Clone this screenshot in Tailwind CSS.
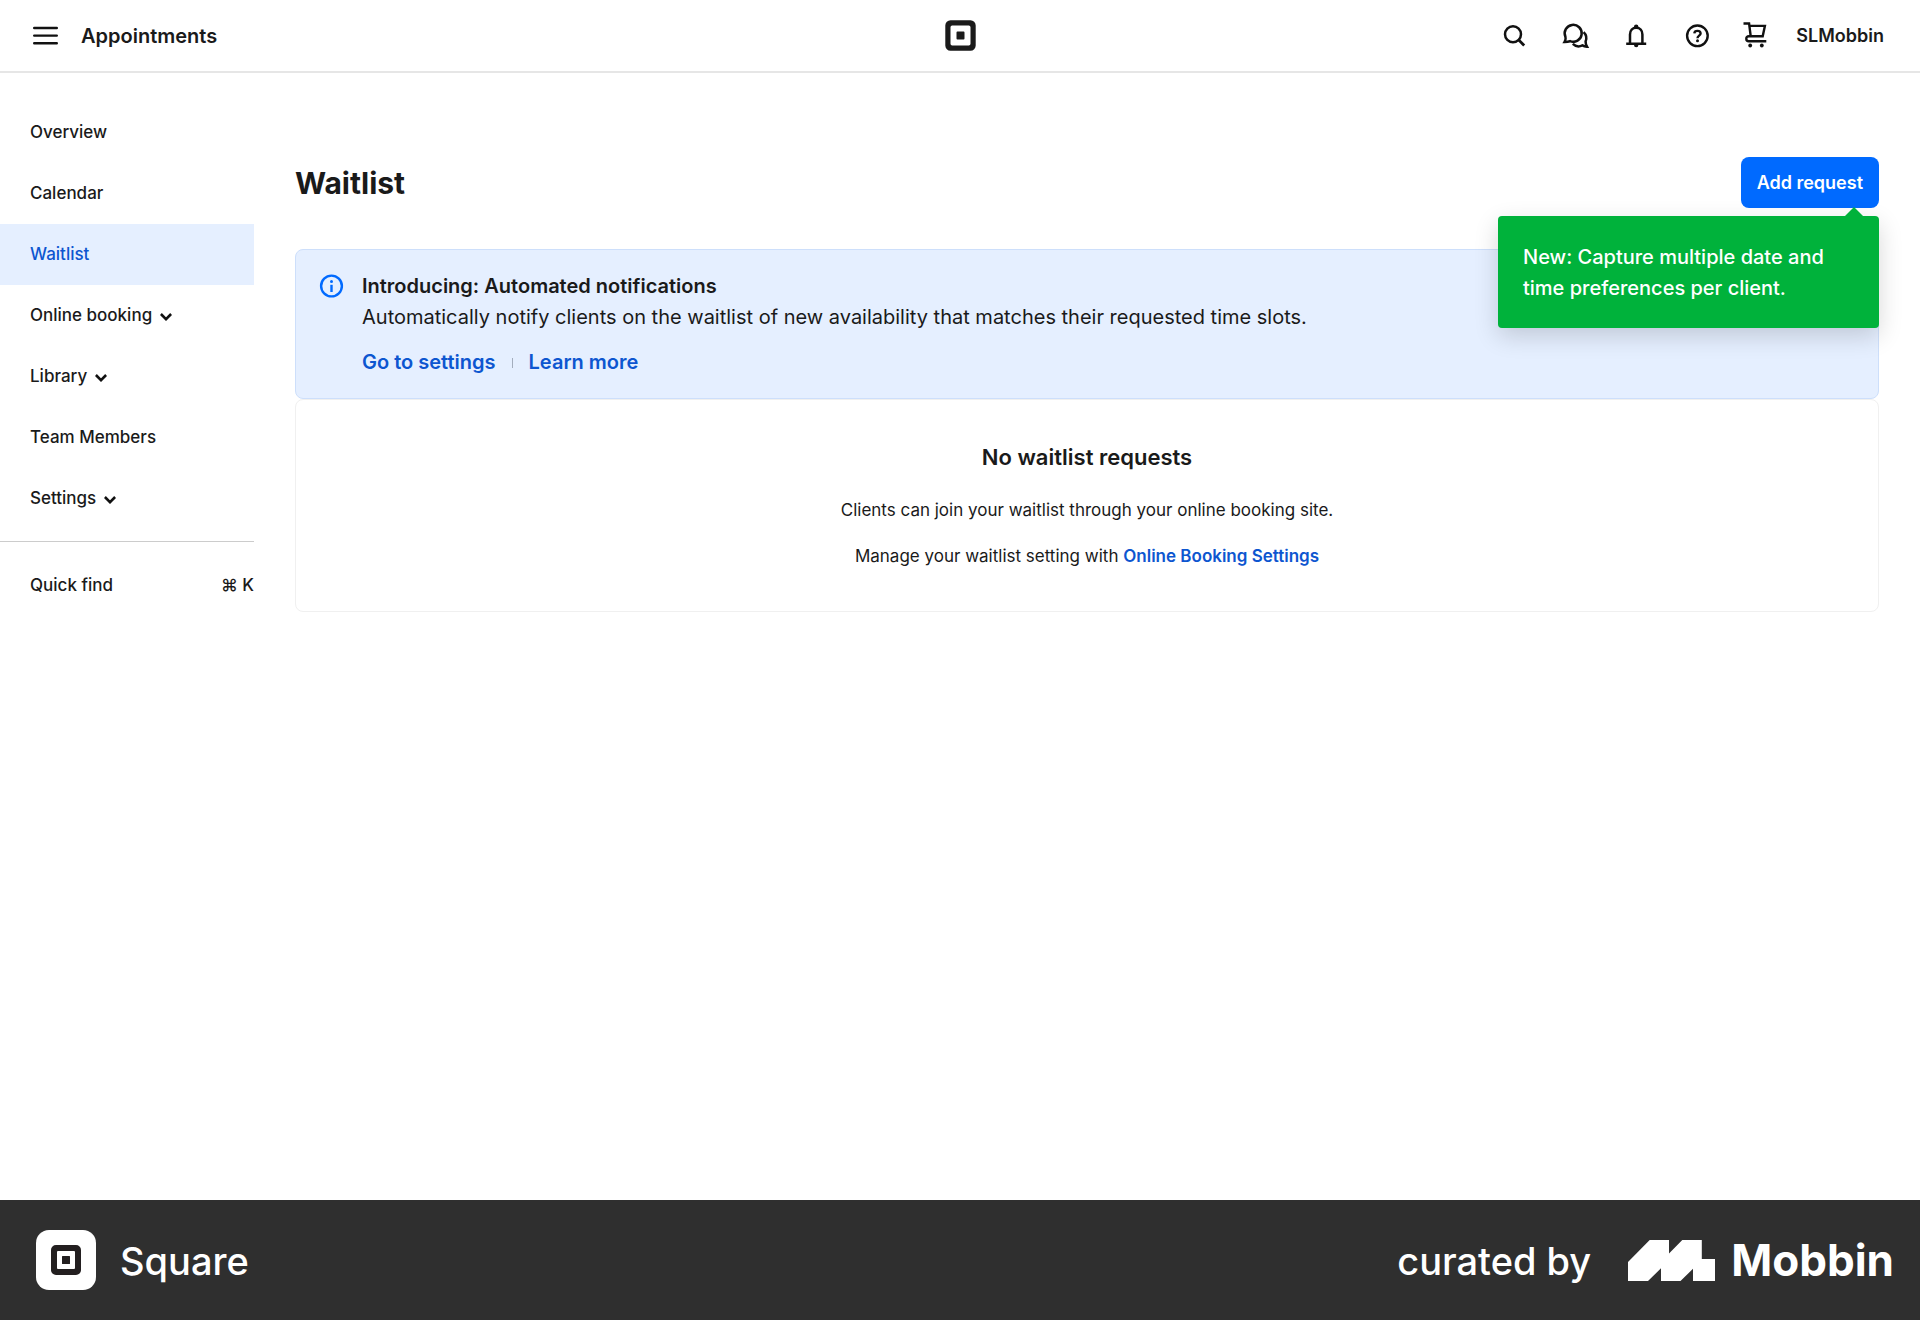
<!DOCTYPE html>
<html lang="en">

<head>
    <meta charset="UTF-8" />
    <meta name="viewport" content="width=device-width, initial-scale=1.0" />
    <title>Waitlist - Appointments</title>
    <script src="https://cdn.jsdelivr.net/npm/@tailwindcss/browser@4"></script>
</head>

<body class="bg-white min-h-screen flex flex-col font-['Inter',sans-serif] text-[#1a1a1a]">
    <header class="grid grid-cols-[1fr_auto_1fr] items-center border-b-2 border-[#e6e6e6]">
        <div class="flex items-center gap-5 pl-[30px]">
            <button type="button" aria-label="Menu">
                <svg class="size-[31px]" viewBox="0 0 31 31" fill="none" stroke="#111" stroke-width="2.4" stroke-linecap="round">
                    <path d="M4.2 8h22.6M4.2 15.6h22.6M4.2 23.3h22.6" />
                </svg>
            </button>
            <span class="text-xl leading-[31px] font-semibold pt-0.5">Appointments</span>
        </div>
        <a href="#" aria-label="Home">
            <svg class="size-[31px]" viewBox="0 0 31 31">
                <path fill="#1a1a1a" fill-rule="evenodd" d="M5.5.3h20a5.2 5.2 0 0 1 5.2 5.2v20a5.2 5.2 0 0 1-5.2 5.2h-20a5.2 5.2 0 0 1-5.2-5.2v-20A5.2 5.2 0 0 1 5.5.3zM7.2 5.5a1.7 1.7 0 0 0-1.7 1.7v16.6a1.7 1.7 0 0 0 1.7 1.7h16.6a1.7 1.7 0 0 0 1.7-1.7V7.2a1.7 1.7 0 0 0-1.7-1.7zM12.4 11.5h6.2a.9.9 0 0 1 .9.9v6.2a.9.9 0 0 1-.9.9h-6.2a.9.9 0 0 1-.9-.9v-6.2a.9.9 0 0 1 .9-.9z" />
            </svg>
        </a>
        <div class="flex items-center justify-end pr-9">
            <button type="button" aria-label="Search" class="w-[61px] h-[71px] flex items-center justify-center">
                <svg class="size-[30px]" viewBox="0 0 30 30" fill="none" stroke="#111" stroke-width="2.5">
                    <circle cx="14" cy="13.3" r="8" />
                    <path d="M19.5 18.8l5.7 5.7" stroke-width="2.8" />
                </svg>
            </button>
            <button type="button" aria-label="Messages" class="w-[61px] h-[71px] flex items-center justify-center">
                <svg class="size-[30px]" viewBox="0 0 30 30" fill="none" stroke="#111" stroke-width="2.5">
                    <path d="M4.6 20.9C5.8 19 6 17.6 5.4 15.7A8.5 8.5 0 1 1 10 20.2Q7.8 20.9 4.6 20.9z" />
                    <path d="M23.6 11.2A8.5 8.5 0 0 1 25.6 20.5Q25.5 23 27 25.7Q24.2 25.5 22.4 24.4A8.5 8.5 0 0 1 12.8 22.9" />
                </svg>
            </button>
            <button type="button" aria-label="Notifications" class="w-[61px] h-[71px] flex items-center justify-center">
                <svg class="size-[30px]" viewBox="0 0 30 30" fill="none" stroke="#111" stroke-width="2.5">
                    <path d="M9 22.5V13.5C9 9.5 11.5 6.7 15.2 6.7S21.4 9.5 21.4 13.5V22.5M5.2 22.8h20" />
                    <path d="M13 6.5V5.6a2.2 2.2 0 0 1 4.4 0v.9zM13 23.5h4.4v.6a2.2 2.2 0 0 1-4.4 0z" fill="#111" stroke="none" />
                </svg>
            </button>
            <button type="button" aria-label="Help" class="w-[61px] h-[71px] flex items-center justify-center">
                <svg class="size-[30px]" viewBox="0 0 30 30" fill="none" stroke="#111" stroke-width="2.4">
                    <circle cx="15.4" cy="14.8" r="10.3" />
                    <path d="M12.3 12.3C12.5 10.6 13.7 9.9 15.4 9.9c1.8 0 3.2 1 3.2 2.6 0 2.1-3.1 2.3-3.1 4.7" />
                    <circle cx="15.5" cy="19.7" r="1.5" fill="#111" stroke="none" />
                </svg>
            </button>
            <button type="button" aria-label="Cart" class="w-[61px] h-[71px] flex items-center justify-center">
                <svg class="size-[30px]" viewBox="0 0 30 30" fill="none" stroke="#111" stroke-width="2.4">
                    <path d="M.5 2.5H6.1L7.7 15.1M6.5 4.9H21.9L19.7 15.2H6C3.9 15.2 3.3 16.5 3.3 17.7S4.2 20.3 5.8 20.3H23.3" />
                    <circle cx="7.2" cy="24.5" r="1.9" fill="#111" stroke="none" />
                    <circle cx="18.8" cy="24.5" r="1.9" fill="#111" stroke="none" />
                </svg>
            </button>
            <button type="button" class="pl-2 text-lg leading-[31px] font-semibold">SLMobbin</button>
        </div>
    </header>

    <div class="flex-1 flex items-start">
        <aside class="w-[254px] shrink-0 pt-[29px] text-[17px] font-medium">
            <nav class="flex flex-col">
                <a href="#" class="h-[61px] pl-[30px] flex items-center">Overview</a>
                <a href="#" class="h-[61px] pl-[30px] flex items-center">Calendar</a>
                <a href="#" class="h-[61px] pl-[30px] flex items-center bg-[#e5efff] text-[#0d56d0]">Waitlist</a>
                <button type="button" class="h-[61px] pl-[30px] flex items-center gap-2">
                    Online booking
                    <svg class="w-3 h-2 mt-0.5" viewBox="0 0 12 8" fill="none" stroke="#111" stroke-width="2.6"><path d="M.9 1l5.1 5.1L11.1 1" /></svg>
                </button>
                <button type="button" class="h-[61px] pl-[30px] flex items-center gap-2">
                    Library
                    <svg class="w-3 h-2 mt-0.5" viewBox="0 0 12 8" fill="none" stroke="#111" stroke-width="2.6"><path d="M.9 1l5.1 5.1L11.1 1" /></svg>
                </button>
                <a href="#" class="h-[61px] pl-[30px] flex items-center">Team Members</a>
                <button type="button" class="h-[61px] pl-[30px] flex items-center gap-2">
                    Settings
                    <svg class="w-3 h-2 mt-0.5" viewBox="0 0 12 8" fill="none" stroke="#111" stroke-width="2.6"><path d="M.9 1l5.1 5.1L11.1 1" /></svg>
                </button>
            </nav>
            <button type="button" class="w-full mt-3 border-t border-[#cccccc] pt-7 pl-[30px] flex items-center justify-between leading-[31px]">
                <span>Quick find</span>
                <span>⌘ K</span>
            </button>
        </aside>

        <main class="flex-1 pt-[84px] pl-[41px] pr-[41px]">
            <div class="flex items-center justify-between">
                <h1 class="text-[30px] font-bold pt-0.5">Waitlist</h1>
                <div class="relative">
                    <button type="button" class="h-[51px] px-4 rounded-lg bg-[#006aff] text-white text-lg font-semibold">Add request</button>
                    <!-- tooltip -->
                    <div class="absolute top-full right-0 mt-2 w-[381px] px-[25px] pt-[26px] pb-6 rounded bg-[#00b23b] text-white text-xl leading-[31px] font-medium shadow-[0_8px_24px_rgba(0,0,0,0.16)]">
                        <svg class="absolute bottom-full right-4 w-[18px] h-[9px]" viewBox="0 0 18 9" fill="#00b23b"><path d="M0 9l9-9 9 9z" /></svg>
                        New: Capture multiple date and time preferences per client.
                    </div>
                </div>
            </div>

            <section class="mt-[41px] flex gap-[17px] rounded-lg border border-[#cddffb] bg-[#e5efff] pt-[21px] pb-5 pl-[22px] pr-6 text-xl leading-[31px]">
                <svg class="size-[27px] mt-0.5 shrink-0" viewBox="0 0 27 27" fill="none" stroke="#006aff" stroke-width="2.4">
                    <circle cx="13.5" cy="13" r="10.4" />
                    <path d="M13.5 11.8v7.2" />
                    <circle cx="13.5" cy="8.5" r="1.5" fill="#006aff" stroke="none" />
                </svg>
                <div>
                    <h2 class="font-semibold">Introducing: Automated notifications</h2>
                    <p>Automatically notify clients on the waitlist of new availability that matches their requested time slots.</p>
                    <div class="mt-3.5 flex items-center gap-4 font-semibold text-[#0d56d0]">
                        <a href="#">Go to settings</a>
                        <span class="w-px h-2.5 bg-[#a3adbd]"></span>
                        <a href="#">Learn more</a>
                    </div>
                </div>
            </section>

            <section class="rounded-lg border border-[#f0f0f0] pt-[42px] pb-[39px] text-center text-[17px] leading-[31px]">
                <h2 class="text-[22px] leading-[31px] font-semibold">No waitlist requests</h2>
                <p class="mt-[22px]">Clients can join your waitlist through your online booking site.</p>
                <p class="mt-[15px]">Manage your waitlist setting with <a href="#" class="font-semibold text-[#0d56d0]">Online Booking Settings</a></p>
            </section>
        </main>
    </div>

    <footer class="h-[120px] bg-[#2f2f2f] text-white flex items-center justify-between pl-9 pr-[26px]">
        <div class="flex items-center gap-6">
            <svg class="size-[60px]" viewBox="0 0 60 60">
                <rect width="60" height="60" rx="13" fill="#fff" />
                <path fill="#231f20" fill-rule="evenodd" d="M20 15h20a5 5 0 0 1 5 5v20a5 5 0 0 1-5 5H20a5 5 0 0 1-5-5V20a5 5 0 0 1 5-5zM22 21a1 1 0 0 0-1 1v16a1 1 0 0 0 1 1h16a1 1 0 0 0 1-1V22a1 1 0 0 0-1-1zM26.6 26h6.8a.6.6 0 0 1 .6.6v6.8a.6.6 0 0 1-.6.6h-6.8a.6.6 0 0 1-.6-.6v-6.8a.6.6 0 0 1 .6-.6z" />
            </svg>
            <span class="text-[38px] font-medium pt-0.5">Square</span>
        </div>
        <div class="flex items-center">
            <span class="text-[38px] font-medium pt-0.5">curated by</span>
            <svg class="w-[87px] h-[41px] ml-[37px]" viewBox="0 0 87 41" fill="#fff">
                <path d="M0 22L21.7 0H41v13.5L54.3 0H73.8v19H87v22H65V28.8L52.5 41H33V28.3L20 41H0z" />
            </svg>
            <span class="text-[44px] font-bold ml-4">Mobbin</span>
        </div>
    </footer>
</body>

</html>
